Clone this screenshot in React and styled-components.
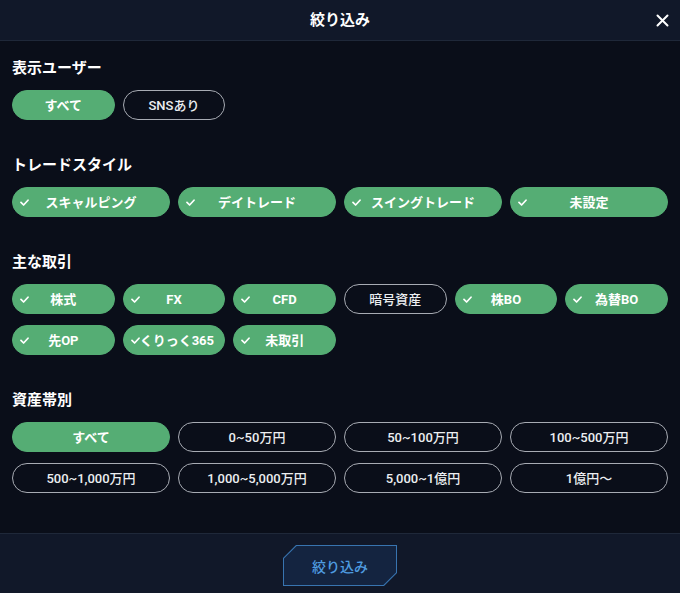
import React from "react";
import styled, { createGlobalStyle } from "styled-components";

const Global = createGlobalStyle`
  html, body { margin: 0; padding: 0; background: #0a0e19; }
  body { font-family: Roboto, "Noto Sans CJK JP", sans-serif; color: #fff; }
  * { box-sizing: border-box; }
`;

const Modal = styled.div`
  width: 680px;
  height: 593px;
  display: flex;
  flex-direction: column;
  background: #0a0e19;
`;

const Header = styled.header`
  height: 41px;
  flex: none;
  background: #111829;
  border-bottom: 1px solid #1f2839;
  display: flex;
  align-items: center;
  justify-content: center;
  position: relative;
`;

const HeaderTitle = styled.h1`
  margin: 0;
  font-size: 15px;
  font-weight: 700;
  line-height: 22px;
  color: #fff;
`;

const CloseButton = styled.button`
  position: absolute;
  right: 10px;
  top: 13px;
  width: 15px;
  height: 15px;
  padding: 0;
  border: 0;
  background: none;
  display: flex;
  align-items: center;
  justify-content: center;
  cursor: pointer;
`;

const Body = styled.main`
  flex: 1;
  padding: 16px 12px 0;
  overflow: hidden;
`;

const Section = styled.section`
  margin-bottom: 34px;
`;

const SectionTitle = styled.h2`
  margin: 0 0 11px;
  font-size: 15px;
  font-weight: 700;
  line-height: 22px;
  color: #fff;
`;

const PillGrid = styled.div`
  display: grid;
  grid-template-columns: repeat(${(p) => p.$cols}, 1fr);
  gap: 11px 8px;
`;

const Pill = styled.button`
  height: 30px;
  border-radius: 15px;
  padding: 0 7px;
  display: grid;
  grid-template-columns: 1fr auto 1fr;
  align-items: center;
  font-family: Roboto, "Noto Sans CJK JP", sans-serif;
  font-size: 13px;
  line-height: 1;
  white-space: nowrap;
  cursor: pointer;
  background: ${(p) => (p.$active ? "#55ad74" : "transparent")};
  border: 1px solid ${(p) => (p.$active ? "#55ad74" : "#a7abb3")};
  color: ${(p) => (p.$active ? "#ffffff" : "#eceef1")};
  font-weight: ${(p) => (p.$active ? 700 : 500)};
`;

const CheckSlot = styled.span`
  display: flex;
  align-items: center;
  justify-self: start;
  padding-top: 1px;
`;

const PillLabel = styled.span`
  grid-column: 2;
`;

const Footer = styled.footer`
  height: 60px;
  flex: none;
  background: #111829;
  border-top: 1px solid #1f2839;
  display: flex;
  justify-content: center;
  align-items: flex-start;
  padding-top: 11px;
`;

const cut = "polygon(13px 0, 100% 0, 100% calc(100% - 13px), calc(100% - 13px) 100%, 0 100%, 0 13px)";

const ActionOuter = styled.button`
  width: 114px;
  height: 41px;
  padding: 1px;
  border: 0;
  background: #3874b0;
  clip-path: ${cut};
  cursor: pointer;
  display: flex;
`;

const ActionInner = styled.span`
  flex: 1;
  background: #142440;
  clip-path: polygon(12.6px 0, 100% 0, 100% calc(100% - 12.6px), calc(100% - 12.6px) 100%, 0 100%, 0 12.6px);
  display: flex;
  align-items: center;
  justify-content: center;
  font-family: Roboto, "Noto Sans CJK JP", sans-serif;
  font-size: 14px;
  font-weight: 500;
  color: #4f9ce0;
`;

const Check = () => (
  <svg width="9" height="7" viewBox="0 0 9 7" fill="none">
    <path d="M1 3.4 L3.6 6 L8 1.2" stroke="#fff" strokeWidth="1.7" strokeLinecap="round" strokeLinejoin="round" />
  </svg>
);

const CloseIcon = () => (
  <svg width="13" height="13" viewBox="0 0 13 13" fill="none">
    <path d="M1.5 1.5 L11.5 11.5 M11.5 1.5 L1.5 11.5" stroke="#fff" strokeWidth="2" strokeLinecap="round" />
  </svg>
);

const Option = ({ label, active, check }) => (
  <Pill $active={active}>
    <CheckSlot>{check && active ? <Check /> : null}</CheckSlot>
    <PillLabel>{label}</PillLabel>
  </Pill>
);

const sections = [
  {
    title: "表示ユーザー",
    cols: 6,
    check: false,
    items: [
      ["すべて", true],
      ["SNSあり", false],
    ],
  },
  {
    title: "トレードスタイル",
    cols: 4,
    check: true,
    items: [
      ["スキャルピング", true],
      ["デイトレード", true],
      ["スイングトレード", true],
      ["未設定", true],
    ],
  },
  {
    title: "主な取引",
    cols: 6,
    check: true,
    items: [
      ["株式", true],
      ["FX", true],
      ["CFD", true],
      ["暗号資産", false],
      ["株BO", true],
      ["為替BO", true],
      ["先OP", true],
      ["くりっく365", true],
      ["未取引", true],
    ],
  },
  {
    title: "資産帯別",
    cols: 4,
    check: false,
    items: [
      ["すべて", true],
      ["0~50万円", false],
      ["50~100万円", false],
      ["100~500万円", false],
      ["500~1,000万円", false],
      ["1,000~5,000万円", false],
      ["5,000~1億円", false],
      ["1億円〜", false],
    ],
  },
];

export default function App() {
  return (
    <>
      <Global />
      <Modal>
        <Header>
          <HeaderTitle>絞り込み</HeaderTitle>
          <CloseButton aria-label="close">
            <CloseIcon />
          </CloseButton>
        </Header>
        <Body>
          {sections.map((s) => (
            <Section key={s.title}>
              <SectionTitle>{s.title}</SectionTitle>
              <PillGrid $cols={s.cols}>
                {s.items.map(([label, active]) => (
                  <Option key={label} label={label} active={active} check={s.check} />
                ))}
              </PillGrid>
            </Section>
          ))}
        </Body>
        <Footer>
          <ActionOuter>
            <ActionInner>絞り込み</ActionInner>
          </ActionOuter>
        </Footer>
      </Modal>
    </>
  );
}
